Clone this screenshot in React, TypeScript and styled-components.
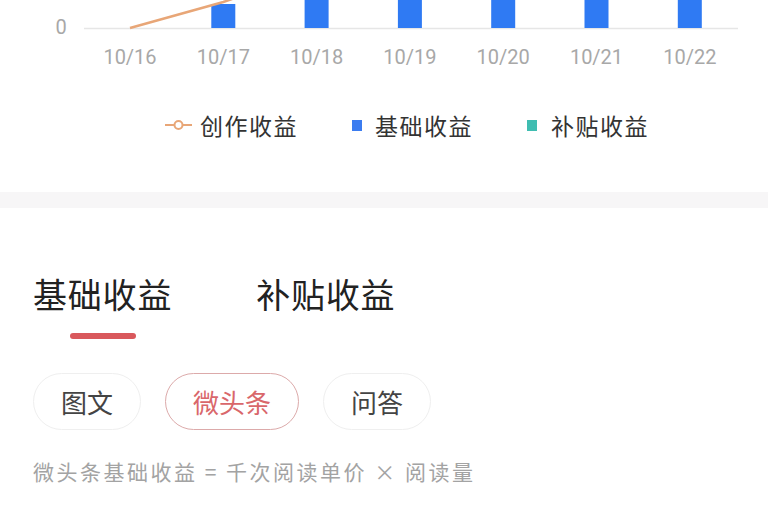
import styled, { createGlobalStyle } from 'styled-components';

const GlobalStyle = createGlobalStyle`
  html, body {
    margin: 0;
    padding: 0;
    background: #ffffff;
  }
  body {
    font-family: "Noto Sans CJK SC", "Noto Sans", sans-serif;
    width: 768px;
    height: 510px;
    overflow: hidden;
  }
`;

const Page = styled.div`
  display: flex;
  flex-direction: column;
  width: 768px;
`;

const ChartSection = styled.section`
  height: 192px;
  background: #ffffff;
  display: flex;
  flex-direction: column;
`;

const ChartSvg = styled.svg`
  display: block;
  width: 768px;
  height: 80px;
`;

const AxisText = styled.text`
  font-family: Roboto, "Liberation Sans", sans-serif;
  font-size: 20px;
  fill: #a8a8a8;
  text-anchor: middle;
`;

const Legend = styled.div`
  display: flex;
  align-items: center;
  margin-top: 30px;
  padding-left: 165px;
  height: 30px;
`;

const LegendItem = styled.div<{ $gap: number }>`
  display: flex;
  align-items: center;
  gap: ${(p) => p.$gap}px;
  margin-right: 54px;
  font-size: 23px;
  line-height: 30px;
  letter-spacing: 1.5px;
  color: #333333;
`;

const Square = styled.span<{ $color: string }>`
  display: block;
  width: 10px;
  height: 11px;
  background: ${(p) => p.$color};
`;

const Band = styled.div`
  height: 16px;
  background: #f7f6f7;
`;

const Content = styled.section`
  display: flex;
  flex-direction: column;
  padding: 66px 0 0 33px;
`;

const Tabs = styled.div`
  display: flex;
  gap: 84px;
`;

const Tab = styled.div`
  display: flex;
  flex-direction: column;
  align-items: center;
`;

const TabLabel = styled.span`
  font-size: 34px;
  line-height: 40px;
  letter-spacing: 0.8px;
  color: #222222;
`;

const Indicator = styled.span<{ $on: boolean }>`
  display: block;
  width: 66px;
  height: 6px;
  margin-top: 19px;
  border-radius: 3px;
  background: ${(p) => (p.$on ? '#d9585c' : 'transparent')};
`;

const Chips = styled.div`
  display: flex;
  gap: 24px;
  margin-top: 34px;
`;

const Chip = styled.div<{ $on: boolean }>`
  box-sizing: border-box;
  height: 57px;
  padding: 0 27px;
  display: flex;
  align-items: center;
  border-radius: 29px;
  border: 1.5px solid ${(p) => (p.$on ? '#dcaaaa' : '#efefef')};
  font-size: 26px;
  color: ${(p) => (p.$on ? '#d9676b' : '#444444')};
  background: #ffffff;
`;

const Formula = styled.p`
  margin: 29px 0 0;
  font-size: 21px;
  line-height: 24px;
  letter-spacing: 2.5px;
  color: #a3a3a3;
`;

const dates = ['10/16', '10/17', '10/18', '10/19', '10/20', '10/21', '10/22'];
const xOf = (i: number) => 130 + i * 93.3;
const barTops = [null, 4, -40, -40, -40, -40, -40];

function Chart() {
  return (
    <ChartSvg viewBox="0 0 768 80">
      <AxisText x="61" y="34">
        0
      </AxisText>
      <line x1="84" y1="28.5" x2="738" y2="28.5" stroke="#e6e6e6" strokeWidth="1.5" />
      {barTops.map((top, i) =>
        top === null ? null : (
          <rect key={i} x={xOf(i) - 12} y={top} width="24" height={28 - top} fill="#2f7af3" />
        ),
      )}
      <polyline
        points={`${xOf(0)},28 ${xOf(1)},2 ${xOf(2)},-30`}
        fill="none"
        stroke="#e8a677"
        strokeWidth="2.5"
      />
      {dates.map((d, i) => (
        <AxisText key={d} x={xOf(i)} y="64">
          {d}
        </AxisText>
      ))}
    </ChartSvg>
  );
}

function LineMarker() {
  return (
    <svg width="27" height="12" viewBox="0 0 27 12">
      <line x1="0" y1="6" x2="27" y2="6" stroke="#e8a677" strokeWidth="2" />
      <circle cx="13.5" cy="6" r="4" fill="#ffffff" stroke="#e8a677" strokeWidth="2" />
    </svg>
  );
}

export default function App() {
  return (
    <Page>
      <GlobalStyle />
      <ChartSection>
        <Chart />
        <Legend>
          <LegendItem $gap={8}>
            <LineMarker />
            创作收益
          </LegendItem>
          <LegendItem $gap={13}>
            <Square $color="#3b7cf0" />
            基础收益
          </LegendItem>
          <LegendItem $gap={14}>
            <Square $color="#3fbdb1" />
            补贴收益
          </LegendItem>
        </Legend>
      </ChartSection>
      <Band />
      <Content>
        <Tabs>
          <Tab>
            <TabLabel>基础收益</TabLabel>
            <Indicator $on />
          </Tab>
          <Tab>
            <TabLabel>补贴收益</TabLabel>
            <Indicator $on={false} />
          </Tab>
        </Tabs>
        <Chips>
          <Chip $on={false}>图文</Chip>
          <Chip $on>微头条</Chip>
          <Chip $on={false}>问答</Chip>
        </Chips>
        <Formula>微头条基础收益 = 千次阅读单价 × 阅读量</Formula>
      </Content>
    </Page>
  );
}
